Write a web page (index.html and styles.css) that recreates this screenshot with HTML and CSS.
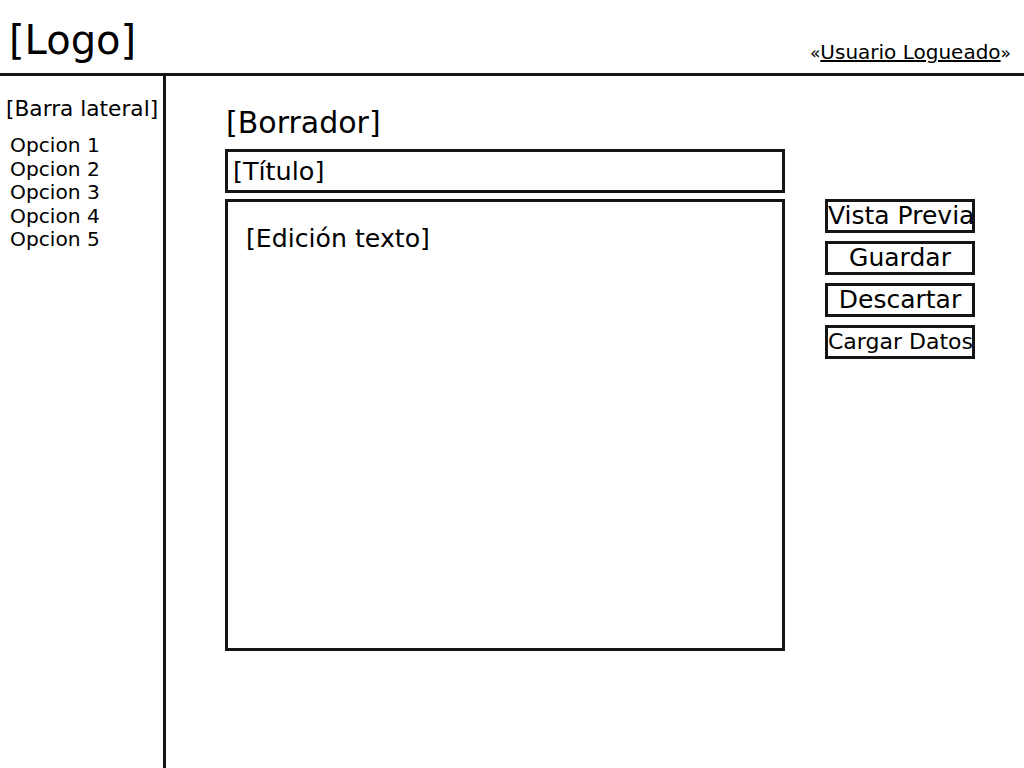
FILE: index.html
```html
<!DOCTYPE html>
<html lang="es">
<head>
<meta charset="utf-8">
<title>Borrador</title>
<link rel="stylesheet" href="styles.css">
</head>
<body>
<header class="topbar">
  <div class="logo">[Logo]</div>
  <div class="user"><span class="quote">«</span><a href="#" class="user-link">Usuario Logueado</a><span class="quote">»</span></div>
</header>
<div class="layout">
  <aside class="sidebar">
    <div class="sidebar-title">[Barra lateral]</div>
    <ul class="menu">
      <li>Opcion 1</li>
      <li>Opcion 2</li>
      <li>Opcion 3</li>
      <li>Opcion 4</li>
      <li>Opcion 5</li>
    </ul>
  </aside>
  <main class="main">
    <h1 class="heading">[Borrador]</h1>
    <div class="title-box">[Título]</div>
    <div class="editor">[Edición texto]</div>
    <div class="actions">
      <button class="btn">Vista Previa</button>
      <button class="btn">Guardar</button>
      <button class="btn">Descartar</button>
      <button class="btn btn-small">Cargar Datos</button>
    </div>
  </main>
</div>
</body>
</html>
```
FILE: styles.css
```css
html, body {
  margin: 0;
  padding: 0;
  background: #fff;
  color: #000;
  font-family: "DejaVu Sans", "Liberation Sans", sans-serif;
}

.topbar {
  height: 73px;
  display: flex;
  justify-content: space-between;
  align-items: flex-start;
  border-bottom: 3px solid #151515;
}

.logo {
  font-size: 40px;
  line-height: 44px;
  margin-top: 18px;
  margin-left: 9px;
}

.user {
  font-size: 20px;
  line-height: 22px;
  margin-top: 41px;
  margin-right: 13px;
}

.quote {
  font-size: 17px;
}

.user-link {
  color: #000;
  text-decoration: underline;
}

.layout {
  display: flex;
  min-height: 692px;
}

.sidebar {
  width: 157px;
  flex: none;
  border-right: 3px solid #151515;
  padding: 20px 0 0 6px;
}

.sidebar-title {
  font-size: 21.7px;
  line-height: 25px;
  white-space: nowrap;
}

.menu {
  list-style: none;
  margin: 13px 0 0 4px;
  padding: 0;
  font-size: 20.2px;
  line-height: 23.6px;
}

.main {
  display: grid;
  grid-template-columns: 560px 150px;
  grid-template-rows: auto auto 1fr;
  column-gap: 40px;
  align-content: start;
  padding: 29px 0 0 59px;
}

.heading {
  grid-column: 1;
  grid-row: 1;
  margin: 0 0 8px 1px;
  font-size: 30px;
  line-height: 36px;
  font-weight: normal;
}

.title-box {
  grid-column: 1;
  grid-row: 2;
  height: 44px;
  box-sizing: border-box;
  border: 3px solid #151515;
  font-size: 25.5px;
  line-height: 32px;
  padding: 3px 0 3px 5px;
  margin-bottom: 6px;
}

.editor {
  grid-column: 1;
  grid-row: 3;
  height: 452px;
  box-sizing: border-box;
  border: 3px solid #151515;
  font-size: 25.2px;
  line-height: 28px;
  padding: 23px 0 0 18px;
}

.actions {
  grid-column: 2;
  grid-row: 3;
  display: flex;
  flex-direction: column;
  gap: 8px;
}

.btn {
  height: 34px;
  width: 150px;
  box-sizing: border-box;
  border: 3px solid #151515;
  background: #fff;
  color: #000;
  font-family: "DejaVu Sans", "Liberation Sans", sans-serif;
  font-size: 25px;
  line-height: 26px;
  padding: 0;
  text-align: center;
  white-space: nowrap;
  border-radius: 0;
}

.btn-small {
  font-size: 22px;
}
```
